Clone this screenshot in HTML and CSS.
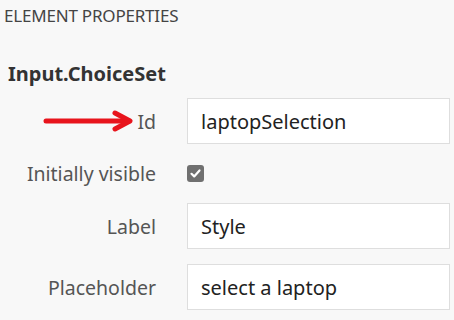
FILE: index.html
```html
<!DOCTYPE html>
<html>
<head>
<meta charset="utf-8">
<link rel="stylesheet" href="styles.css">
</head>
<body>
<div class="panel">
  <div class="heading">ELEMENT PROPERTIES</div>
  <div class="title">Input.ChoiceSet</div>
  <div class="form">
    <div class="label id-label">Id
      <svg class="arrow" width="100" height="24" viewBox="0 0 100 24">
        <path d="M6 12 H89" stroke="#e8141c" stroke-width="5" stroke-linecap="round" fill="none"/>
        <path d="M75 4 L90 12 L75 20" stroke="#e8141c" stroke-width="5" stroke-linecap="round" stroke-linejoin="round" fill="none"/>
      </svg>
    </div>
    <div class="field">laptopSelection</div>
    <div class="label">Initially visible</div>
    <div class="check-cell">
      <span class="check"><svg width="13" height="13" viewBox="0 0 13 13"><path d="M2.5 6.8 L5.2 9.4 L10.5 3.4" stroke="#fff" stroke-width="2.2" fill="none" stroke-linecap="round" stroke-linejoin="round"/></svg></span>
    </div>
    <div class="label">Label</div>
    <div class="field">Style</div>
    <div class="label">Placeholder</div>
    <div class="field">select a laptop</div>
  </div>
</div>
</body>
</html>
```
FILE: styles.css
```css
html, body {
  margin: 0;
  padding: 0;
  background: #f8f8f8;
}
body {
  font-family: "Noto Sans", "Open Sans", sans-serif;
  width: 454px;
  height: 320px;
  overflow: hidden;
}
.panel {
  padding: 4px 4px 0 4px;
}
.heading {
  font-size: 17px;
  color: #444;
  line-height: 24px;
  letter-spacing: -0.2px;
}
.title {
  margin-top: 34px;
  margin-left: 4px;
  font-size: 20px;
  font-weight: bold;
  color: #333;
  line-height: 24px;
}
.form {
  margin-top: 12px;
  display: grid;
  grid-template-columns: 152px 263px;
  column-gap: 31px;
  row-gap: 15px;
  grid-template-rows: 46px 29px 46px 46px;
}
.label {
  font-size: 19.5px;
  color: #555;
  text-align: right;
  align-self: center;
  position: relative;
}
.field {
  background: #fff;
  border: 1px solid #dedede;
  box-sizing: border-box;
  height: 46px;
  padding-left: 13px;
  display: flex;
  align-items: center;
  font-size: 20px;
  color: #222;
}
.check-cell {
  display: flex;
  align-items: center;
}
.check {
  width: 17px;
  height: 17px;
  border-radius: 3px;
  background: #707070;
  display: flex;
  align-items: center;
  justify-content: center;
}
.arrow {
  position: absolute;
  right: 16px;
  top: 50%;
  margin-top: -12px;
}
```
